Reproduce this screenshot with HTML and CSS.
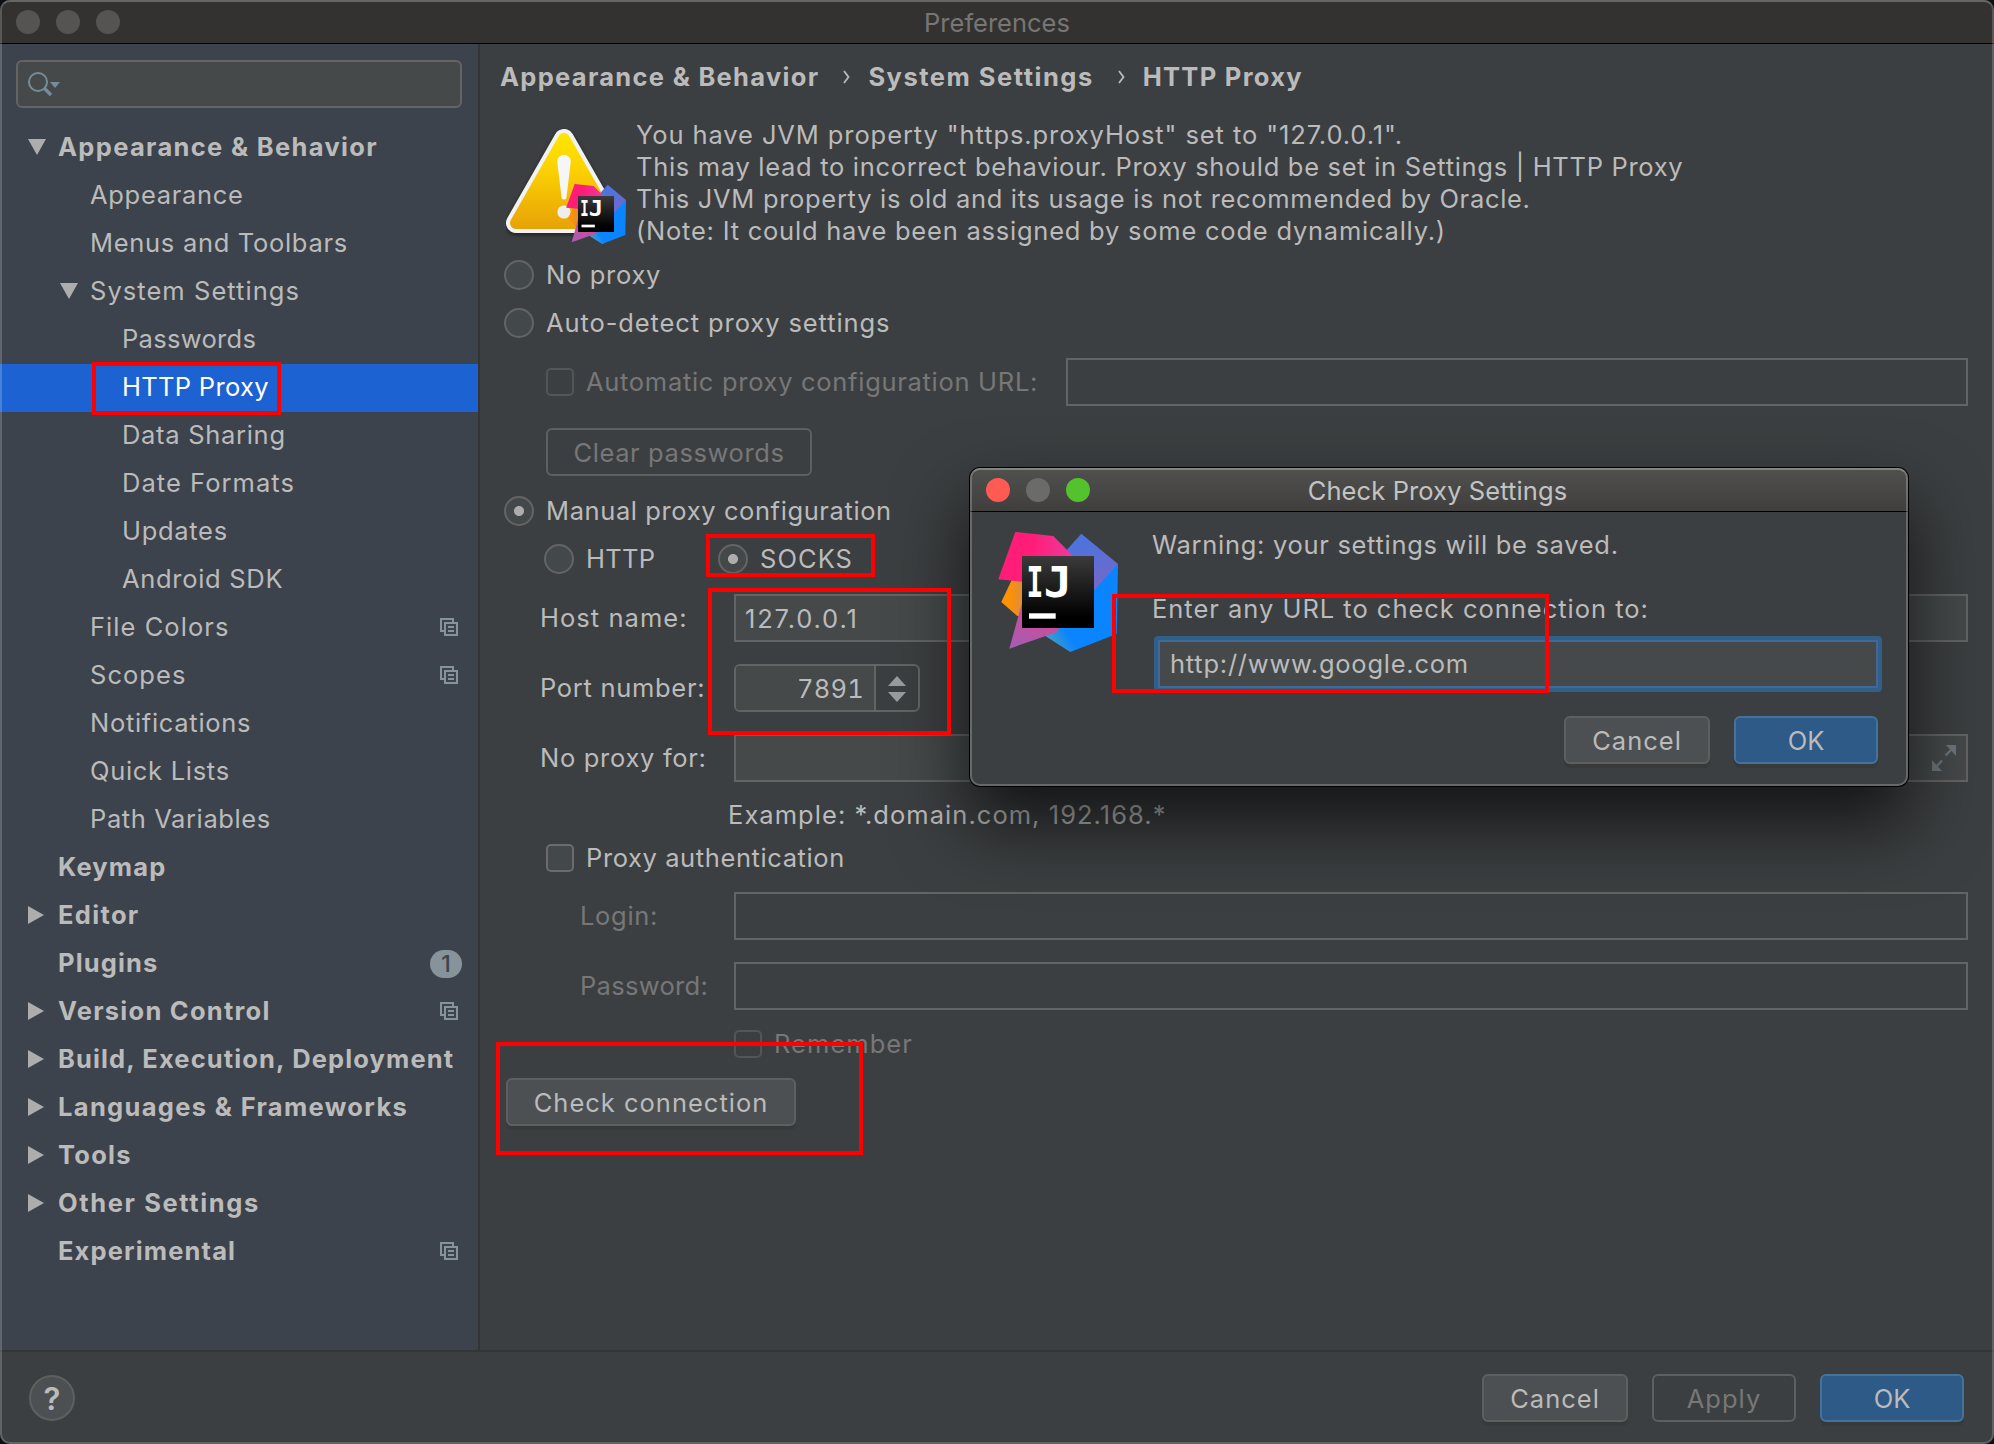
FILE: index.html
```html
<!DOCTYPE html>
<html lang="en">
<head>
<meta charset="utf-8">
<title>Preferences</title>
<link rel="stylesheet" href="styles.css">
</head>
<body>
<svg class="defs" width="0" height="0" aria-hidden="true">
  <defs>
    <linearGradient id="pink" x1="0" y1="0" x2="1" y2="0"><stop offset=".45" stop-color="#ff1d77"/><stop offset="1" stop-color="#ee3aa0"/></linearGradient>
    <linearGradient id="orange" x1="0" y1="0" x2="1" y2="0"><stop offset=".3" stop-color="#fd9204"/><stop offset="1" stop-color="#cf8a50"/></linearGradient>
    <linearGradient id="indigo" x1=".3" y1="0" x2=".6" y2="1"><stop offset=".2" stop-color="#4e73dc"/><stop offset="1" stop-color="#7668c8"/></linearGradient>
    <linearGradient id="azure" x1="0" y1="1" x2=".45" y2=".7"><stop offset="0" stop-color="#5aa9b0"/><stop offset=".7" stop-color="#0a84ff"/></linearGradient>
    <linearGradient id="violet" x1=".6" y1="0" x2=".2" y2="1"><stop offset="0" stop-color="#e0458f"/><stop offset="1" stop-color="#a55cb4"/></linearGradient>
    <linearGradient id="ink" x1="0" y1="0" x2="0" y2="1"><stop offset="0" stop-color="#3b3b3b"/><stop offset=".85" stop-color="#000"/></linearGradient>
    <linearGradient id="amber" gradientUnits="userSpaceOnUse" x1="0" y1="5" x2="0" y2="101"><stop offset="0" stop-color="#ffe600"/><stop offset=".4" stop-color="#fbd002"/><stop offset="1" stop-color="#e6a207"/></linearGradient>
    <symbol id="logo" viewBox="0 0 120 120">
      <path fill="url(#orange)" d="M13.7 48 30 48V84H19.3L3.3 70Z"/>
      <path fill="url(#azure)" d="M120 32 118.7 102 72.3 120 47.3 104 80 50Z"/>
      <path fill="url(#indigo)" d="M83.3 1.7 120 32 96 58 60 40 68.7 18Z"/>
      <path fill="url(#pink)" d="M17.3 0 55.3 4 76 25 60 52 24 49.7.3 47.3Z"/>
      <path fill="url(#violet)" d="M24 71 11.3 116.7 57 100.7 66 92 40 70Z"/>
      <rect x="24" y="24" width="72" height="72" fill="url(#ink)"/>
      <g class="logo-text">
        <text transform="translate(28.6 64.7) scale(.66 1)">I</text>
        <text transform="translate(45.6 64.7) scale(1.12 1)">J</text>
      </g>
      <rect x="31" y="81.3" width="26.7" height="5.4" fill="#fff"/>
    </symbol>
    <symbol id="copy" viewBox="0 0 18 18">
      <path fill="none" stroke="#87939a" stroke-width="2" d="M13 5V1H1V13H5M5 5H17V17H5ZM8 9H14M8 13H14"/>
    </symbol>
    <symbol id="down" viewBox="0 0 18 16"><path fill="#adadad" d="M0 0H18L9 16Z"/></symbol>
    <symbol id="right" viewBox="0 0 16 18"><path fill="#adadad" d="M0 0 16 9 0 18Z"/></symbol>
  </defs>
</svg>

<div class="window">
  <header class="titlebar">
    <div class="lights"><i></i><i></i><i></i></div>
    <h1>Preferences</h1>
  </header>

  <div class="panes">
    <aside class="sidebar">
      <div class="search">
        <svg width="34" height="26" viewBox="0 0 34 26"><circle cx="10" cy="10" r="9" fill="none" stroke="#778c99" stroke-width="2"/><path stroke="#778c99" stroke-width="3.4" d="M16 16 23 23"/><path fill="#778c99" d="M22 10H32L27 16Z"/></svg>
      </div>
      <ul class="tree">
        <li class="l0"><svg class="tri" width="18" height="16"><use href="#down"/></svg><span class="loose">Appearance &amp; Behavior</span></li>
        <li class="l1"><span>Appearance</span></li>
        <li class="l1"><span>Menus and Toolbars</span></li>
        <li class="l1"><svg class="tri" width="18" height="16"><use href="#down"/></svg><span class="wide">System Settings</span></li>
        <li class="l2"><span class="tight">Passwords</span></li>
        <li class="l2 selected"><span class="tight">HTTP Proxy</span></li>
        <li class="l2"><span>Data Sharing</span></li>
        <li class="l2"><span class="wide">Date Formats</span></li>
        <li class="l2"><span>Updates</span></li>
        <li class="l2"><span>Android SDK</span></li>
        <li class="l1"><span class="wide">File Colors</span><svg class="copy" width="18" height="18"><use href="#copy"/></svg></li>
        <li class="l1"><span class="wide">Scopes</span><svg class="copy" width="18" height="18"><use href="#copy"/></svg></li>
        <li class="l1"><span>Notifications</span></li>
        <li class="l1"><span>Quick Lists</span></li>
        <li class="l1"><span class="even">Path Variables</span></li>
        <li class="l0"><span class="snug">Keymap</span></li>
        <li class="l0"><svg class="tri" width="16" height="18"><use href="#right"/></svg><span class="loose">Editor</span></li>
        <li class="l0"><span class="snug">Plugins</span><b class="badge">1</b></li>
        <li class="l0"><svg class="tri" width="16" height="18"><use href="#right"/></svg><span>Version Control</span><svg class="copy" width="18" height="18"><use href="#copy"/></svg></li>
        <li class="l0"><svg class="tri" width="16" height="18"><use href="#right"/></svg><span class="snug">Build, Execution, Deployment</span></li>
        <li class="l0"><svg class="tri" width="16" height="18"><use href="#right"/></svg><span class="loose">Languages &amp; Frameworks</span></li>
        <li class="l0"><svg class="tri" width="16" height="18"><use href="#right"/></svg><span>Tools</span></li>
        <li class="l0"><svg class="tri" width="16" height="18"><use href="#right"/></svg><span class="airy">Other Settings</span></li>
        <li class="l0"><span class="snug">Experimental</span><svg class="copy" width="18" height="18"><use href="#copy"/></svg></li>
      </ul>
    </aside>

    <main class="content">
      <nav class="crumbs">
        <span>Appearance &amp; Behavior</span>
        <svg width="7" height="14" viewBox="0 0 7 14"><path fill="none" stroke="#bbb" stroke-width="1.8" d="M1 1 5.5 7 1 13"/></svg>
        <span class="crumb-mid">System Settings</span>
        <svg width="7" height="14" viewBox="0 0 7 14"><path fill="none" stroke="#bbb" stroke-width="1.8" d="M1 1 5.5 7 1 13"/></svg>
        <span>HTTP Proxy</span>
      </nav>

      <section class="notice">
        <svg class="warning" width="122" height="118" viewBox="0 0 122 118">
          <path class="tri-edge" d="M58 11 10 95H106Z"/>
          <path class="tri-face" d="M58 11 10 95H106Z"/>
          <path fill="#f6f6f6" d="M51.2 33.500a6.800 6.800 0 0 1 13.600 0L60.500 69a2.500 2.500 0 0 1-5 0Z"/>
          <circle cx="58" cy="84" r="6.600" fill="#eee"/>
          <use href="#logo" x="60" y="56" width="60" height="60"/>
        </svg>
        <p><span class="first-line">You have JVM property "https.proxyHost" set to "127.0.0.1".</span><br>This may lead to incorrect behaviour. Proxy should be set in Settings | HTTP Proxy<br>This JVM property is old and its usage is not recommended by Oracle.<br><span class="last-line">(Note: It could have been assigned by some code dynamically.)</span></p>
      </section>

      <form class="form">
        <label class="row radio-row"><i class="radio"></i><span>No proxy</span></label>
        <label class="row radio-row"><i class="radio"></i><span class="roomy">Auto-detect proxy settings</span></label>
        <div class="row indent url-row"><i class="check off"></i><span class="dim url-label">Automatic proxy configuration URL:</span><div class="field disabled"></div></div>
        <div class="row indent gap22"><div class="button ghost clear">Clear passwords</div></div>
        <label class="row radio-row manual"><i class="radio on"></i><span class="even">Manual proxy configuration</span></label>
        <div class="row radio-row kinds"><i class="radio"></i><span class="kind-http">HTTP</span><i class="radio on"></i><span class="wide">SOCKS</span></div>
        <div class="row entry gap11"><span class="label wide">Host name:</span><div class="field digits">127.0.0.1</div></div>
        <div class="row entry gap22"><span class="label">Port number:</span>
          <div class="spinner"><div class="spin-value">7891</div><div class="spin-arrows"><svg width="18" height="26" viewBox="0 0 18 26"><path fill="#9a9da0" d="M0 10 9 0 18 10ZM0 16H18L9 26Z"/></svg></div></div></div>
        <div class="row entry gap22"><span class="label">No proxy for:</span><div class="field expandable">
          <svg width="24" height="26" viewBox="0 0 24 26"><path fill="#6b767c" d="M14 0H24V11ZM0 15V26H10Z"/><path stroke="#6b767c" stroke-width="2.4" d="M13.500 10.500 20 4M10 15.500 4 22"/></svg></div></div>
        <p class="example">Example: *.domain.com, 192.168.*</p>
        <label class="row indent auth"><i class="check"></i><span class="even">Proxy authentication</span></label>
        <div class="row entry sub login"><span class="label dim">Login:</span><div class="field disabled"></div></div>
        <div class="row entry sub gap22"><span class="label dim tight">Password:</span><div class="field disabled"></div></div>
        <label class="row remember"><i class="check off"></i><span class="dim wide">Remember</span></label>
        <div class="row test"><div class="button connect">Check connection</div></div>
      </form>
    </main>
  </div>

  <footer class="footer">
    <div class="help">?</div>
    <div class="actions"><div class="button w146">Cancel</div><div class="button ghost">Apply</div><div class="button primary">OK</div></div>
  </footer>
</div>
<div class="window-edge"></div>

<div class="dialog">
  <header class="dialog-title">
    <div class="lights active"><i></i><i></i><i></i></div>
    <h2>Check Proxy Settings</h2>
  </header>
  <div class="dialog-body">
    <svg class="dialog-logo" width="120" height="120"><use href="#logo"/></svg>
    <div class="dialog-form">
      <p>Warning: your settings will be saved.</p>
      <p class="ask">Enter any URL to check connection to:</p>
      <div class="focus-field">http://www.google.com</div>
      <div class="dialog-actions"><div class="button w146">Cancel</div><div class="button primary">OK</div></div>
    </div>
  </div>
  <div class="dialog-edge"></div>
</div>

<div class="mark mark-tree"></div>
<div class="mark mark-socks"></div>
<div class="mark mark-host"></div>
<div class="mark mark-test"></div>
<div class="mark mark-url"></div>
</body>
</html>
```
FILE: styles.css
```css
* { box-sizing: border-box; }
body {
  margin: 0;
  width: 1994px;
  height: 1444px;
  overflow: hidden;
  background: #0c0f14;
  color: #bbb;
  font: 25.5px/32px Inter, "Liberation Sans", sans-serif;
  letter-spacing: .7px;
  white-space: nowrap;
}
h1, h2, p, ul { margin: 0; padding: 0; font-weight: 400; }
svg { display: block; flex: none; }
.defs { position: absolute; }
.logo-text { fill: #fff; font: 700 42.5px "DejaVu Sans Mono", monospace; letter-spacing: 0; }
.wide { letter-spacing: 1.05px; }
.roomy { letter-spacing: .9px; }
.even { letter-spacing: .6px; }
.tight { letter-spacing: .3px; }
.dim { color: #777; }

.window {
  display: flex;
  flex-direction: column;
  height: 1444px;
  border-radius: 10px;
  overflow: hidden;
  background: #3c3f41;
}
.window-edge {
  position: absolute;
  inset: 0;
  width: 1994px;
  height: 1444px;
  border: 2px solid rgba(255, 255, 255, .19);
  border-top-color: rgba(255, 255, 255, .26);
  border-radius: 10px;
  pointer-events: none;
}
.titlebar, .dialog-title { display: grid; grid-template-columns: 1fr auto 1fr; align-items: center; }
.titlebar { height: 44px; padding: 1px 16px 0; background: #343230; border-bottom: 1px solid #000; }
.titlebar h1, .dialog-title h2 { font-size: 25.5px; letter-spacing: 0; }
.titlebar h1 { color: #777675; padding-top: 1px; }
.lights { display: flex; gap: 16px; }
.lights i { width: 24px; height: 24px; border-radius: 50%; background: #555452; }

.panes { display: flex; flex: 1; min-height: 0; }
.sidebar { width: 480px; flex: none; padding-top: 16px; background: #3d434c; border-right: 2px solid #343435; }
.search {
  width: 446px;
  height: 48px;
  margin: 0 16px 16px;
  padding: 10px 0 0 10px;
  background: #45494a;
  border: 2px solid #646464;
  border-radius: 6px;
}
.tree { list-style: none; }
.tree li { display: flex; align-items: center; height: 48px; padding: 0 20px 2px 0; }
.tree .l0 { padding-left: 58px; font-weight: 700; letter-spacing: 1.25px; }
.tree .l1 { padding-left: 90px; }
.tree .l2 { padding-left: 122px; }
.tree .snug { letter-spacing: 1.13px; }
.tree .loose { letter-spacing: 1.33px; }
.tree .airy { letter-spacing: 1.6px; }
.tree .tri { margin: 0 12px 0 -30px; }
.tree .tri[width="16"] { margin-right: 14px; }
.tree .selected { background: #1c62d2; color: #fff; }
.copy { margin-left: auto; }
.badge {
  width: 32px;
  height: 28px;
  margin: 2px -4px 0 auto;
  border-radius: 14px;
  background: #87939a;
  color: #3d434c;
  font: 500 23px/28px Inter, sans-serif;
  letter-spacing: 0;
  text-align: center;
}

.content { flex: 1; padding: 0 26px 0 24px; }
.crumbs { display: flex; align-items: center; height: 66px; margin-left: -4px; font-weight: 700; letter-spacing: 1.3px; }
.crumbs svg { margin: 0 18px 0 24px; }
.crumb-mid { letter-spacing: 1.5px; }
.notice { display: flex; height: 141px; padding: 9px 0 0 2px; }
.notice p { margin-left: 8px; letter-spacing: .69px; }
.first-line { letter-spacing: .9px; }
.last-line { letter-spacing: .77px; }
.warning { margin: 9px 0 0; }
.tri-edge { fill: #f2f2f2; stroke: #f2f2f2; stroke-width: 20px; stroke-linejoin: round; filter: drop-shadow(0 2px 2px rgba(0, 0, 0, .5)); }
.tri-face { fill: url(#amber); stroke: url(#amber); stroke-width: 12px; stroke-linejoin: round; }

.row { display: flex; align-items: center; }
.radio-row { height: 48px; }
.radio { flex: none; width: 30px; height: 30px; margin-right: 12px; border: 2px solid #646464; border-radius: 50%; background: #43494a; }
.radio.on { background: radial-gradient(circle, #adadad 4.6px, #43494a 5.4px); }
.check { flex: none; width: 28px; height: 28px; margin-right: 12px; border: 2px solid #6b6b6b; border-radius: 5px; background: #43494a; }
.check.off { border-color: #535556; background: none; }
.indent { padding-left: 42px; }
.gap11 { margin-top: 11px; }
.gap22 { margin-top: 22px; }
.url-row { margin-top: 11px; }
.url-label { width: 480px; flex: none; }
.field { flex: 1; height: 48px; padding-left: 10px; line-height: 45px; border: 2px solid #646464; background: #45494a; }
.field.disabled { background: none; }
.digits { padding-left: 9px; letter-spacing: 1.85px; }
.manual { margin-top: 11px; }
.kinds { padding-left: 40px; }
.kind-http { width: 132px; letter-spacing: .3px; }
.label { width: 194px; flex: none; }
.entry { padding-left: 36px; }
.sub { padding-left: 76px; }
.sub .label { width: 154px; }
.spinner { display: flex; width: 186px; height: 48px; border: 2px solid #646464; border-radius: 6px; background: #3c3f41; overflow: hidden; }
.spin-value { width: 140px; padding-right: 10px; background: #45494a; text-align: right; line-height: 45px; border-right: 2px solid #646464; letter-spacing: .2px; font-variant-numeric: tabular-nums; }
.spin-arrows { flex: 1; display: flex; align-items: center; justify-content: center; padding-top: 2px; }
.expandable { display: flex; justify-content: flex-end; align-items: center; padding-right: 10px; }
.example { height: 36px; margin: 15px 0 0 224px; line-height: 36px; letter-spacing: 1.05px; }
.auth { height: 50px; }
.login { margin-top: 9px; }
.remember { height: 32px; margin-top: 18px; padding-left: 230px; }
.test { margin-top: 18px; padding-left: 2px; }

.button {
  width: 144px;
  height: 48px;
  line-height: 45px;
  text-align: center;
  border: 2px solid #5e6060;
  border-radius: 6px;
  background: #4c5052;
  box-shadow: 0 4px 0 #37393b;
  letter-spacing: 1px;
}
.button.w146 { width: 146px; }
.button.primary { background: #2d5a87; border-color: #43739a; letter-spacing: 0; }
.button.ghost { background: none; box-shadow: none; color: #777; }
.button.clear { width: 266px; letter-spacing: .6px; }
.button.connect { width: 290px; }

.footer { display: flex; justify-content: space-between; height: 94px; padding: 22px 30px 0 29px; border-top: 2px solid #343535; }
.help { width: 46px; height: 46px; margin-top: 1px; border: 2px solid #5e6060; border-radius: 50%; background: #4c5052; font-size: 31px; font-weight: 600; line-height: 43px; text-align: center; letter-spacing: 0; }
.actions, .dialog-actions { display: flex; gap: 24px; }

.dialog {
  position: absolute;
  left: 970px;
  top: 468px;
  width: 938px;
  height: 318px;
  border-radius: 10px;
  background: #3c3f41;
  box-shadow: 0 0 0 1px #000, 0 36px 72px 2px rgba(0, 0, 0, .68);
}
.dialog-edge { position: absolute; inset: 0; border: 2px solid rgba(255, 255, 255, .22); border-top-color: rgba(255, 255, 255, .3); border-radius: 10px; }
.dialog-title { height: 44px; padding: 0 16px; background: linear-gradient(#50504e, #403f3d); border-bottom: 1px solid #000; border-radius: 10px 10px 0 0; }
.dialog-title h2 { color: #c3c3c2; letter-spacing: .1px; padding: 2px 3px 0 0; }
.active i:nth-child(1) { background: #ff5b52; }
.active i:nth-child(2) { background: #6b6b6a; }
.active i:nth-child(3) { background: #54c22c; }
.dialog-body { display: flex; gap: 34px; padding: 17px 26px 0 28px; }
.dialog-logo { margin-top: 3px; }
.dialog-form { flex: 1; }
.ask { margin: 32px 0 11px; letter-spacing: .98px; }
.focus-field { height: 56px; margin-left: 2px; padding: 0 0 0 12px; line-height: 47px; letter-spacing: .76px; background: #45494a; border: 4px solid #305f87; border-radius: 4px; box-shadow: inset 0 0 0 2px #3d6a98; }
.dialog-actions { justify-content: flex-end; margin: 24px 4px 0 0; }

.mark { position: absolute; border: 4px solid #f00; }
.mark-tree { left: 92px; top: 362px; width: 189px; height: 53px; }
.mark-socks { left: 706px; top: 534px; width: 169px; height: 43px; }
.mark-host { left: 708px; top: 588px; width: 243px; height: 147px; }
.mark-test { left: 496px; top: 1042px; width: 367px; height: 113px; }
.mark-url { left: 1112px; top: 594px; width: 437px; height: 99px; }
```
